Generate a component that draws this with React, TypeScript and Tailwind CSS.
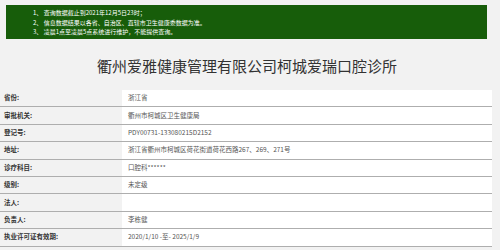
import React from 'react';

const rows: { label: string; value: string }[] = [
  { label: '省份:', value: '浙江省' },
  { label: '审批机关:', value: '衢州市柯城区卫生健康局' },
  { label: '登记号:', value: 'PDY00731-133080215D2152' },
  { label: '地址:', value: '浙江省衢州市柯城区荷花街道荷花西路267、269、271号' },
  { label: '诊疗科目:', value: '口腔科******' },
  { label: '级别:', value: '未定级' },
  { label: '法人:', value: '' },
  { label: '负责人:', value: '李栋健' },
  { label: '执业许可证有效期:', value: '2020/1/10 -至- 2025/1/9' },
];

const App: React.FC = () => {
  return (
    <div
      className="w-[500px] h-[250px] overflow-hidden bg-[#f2f2f2]"
      style={{ fontFamily: '"Noto Sans CJK SC", "Noto Sans", sans-serif' }}
    >
      <div className="pt-[5px] pl-[6px] pr-[13px]">
        <div className="h-[34px] bg-[#175d0a] pl-[27px] pt-[3px] text-white text-[6px] leading-[9.5px]">
          <p>1、 查询数据截止到2021年12月5日23时；</p>
          <p>2、 信息数据结果以各省、自治区、直辖市卫生健康委数据为准。</p>
          <p>3、 凌晨1点至凌晨5点系统进行维护，不能提供查询。</p>
        </div>
      </div>

      <h1 className="mt-[17px] h-[34px] pr-[6px] text-center text-[15px] leading-[20px] text-[#333]">
        衢州爱雅健康管理有限公司柯城爱瑞口腔诊所
      </h1>

      <div className="mr-[8px]">
        {rows.map((r) => (
          <div key={r.label} className="flex h-[17.4px] border-b border-[#aeaeae]">
            <div className="w-[122px] pl-[4px] flex items-center text-[6.5px] font-bold text-[#333]">
              {r.label}
            </div>
            <div className="flex-1 bg-white pl-[6px] flex items-center text-[6.5px] text-[#555]">
              {r.value}
            </div>
          </div>
        ))}
      </div>
    </div>
  );
};

export default App;
